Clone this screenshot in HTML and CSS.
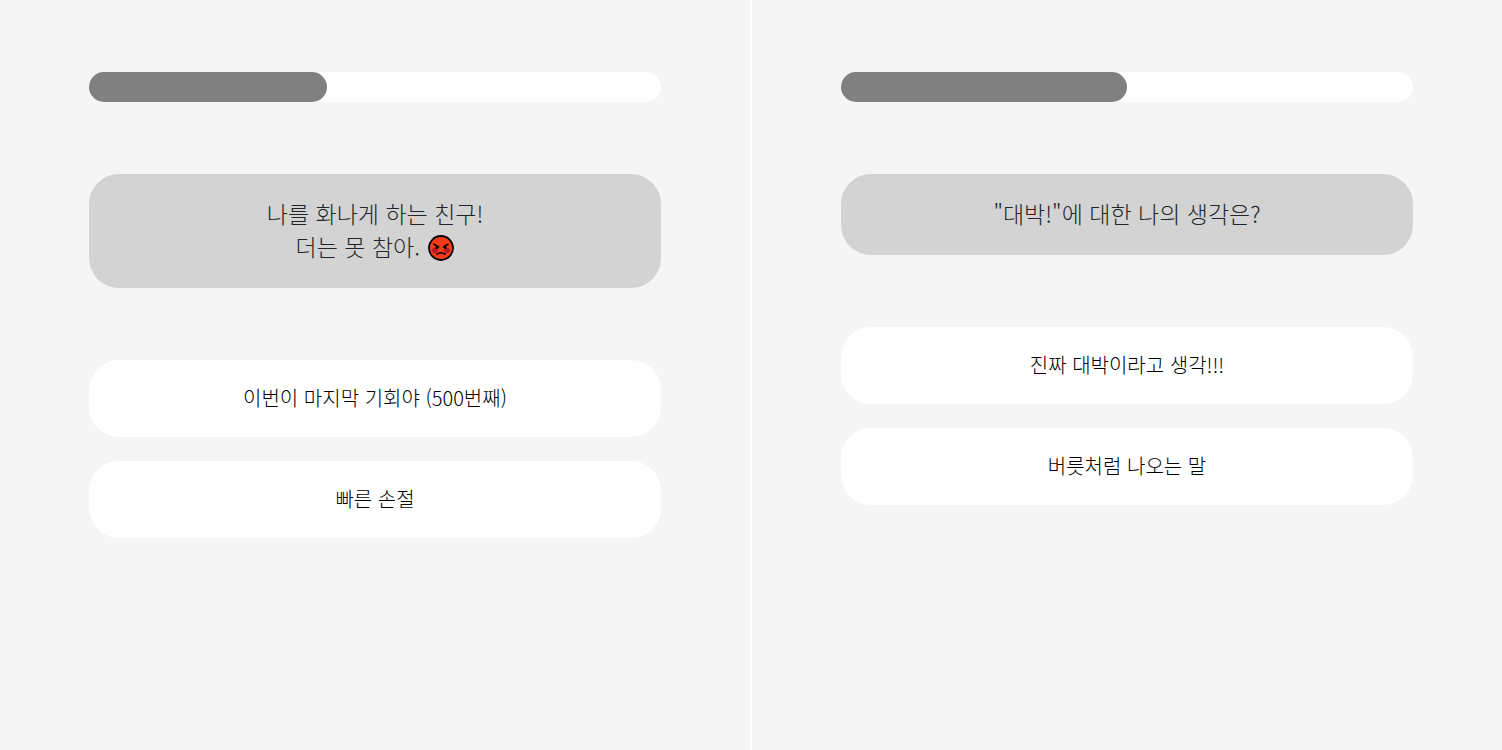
FILE: index.html
```html
<!DOCTYPE html>
<html lang="ko">
<head>
    <meta charset="UTF-8">
    <meta name="viewport" content="width=device-width, initial-scale=1.0">
    <title>테스트</title>
    <link rel="stylesheet" href="styles.css">
</head>
<body>
    <main class="screens">
        <section class="screen">
            <div class="status" role="progressbar" aria-label="진행" aria-valuemin="0" aria-valuemax="12" aria-valuenow="5">
                <div class="statusBar" style="width: 41.67%"></div>
            </div>
            <h1 class="qBox">나를 화나게 하는 친구!<br>더는 못 참아.
                <svg class="emoji" viewBox="0 0 26 26" role="img" aria-label="화난 얼굴">
                    <circle cx="13" cy="13" r="12" fill="#f23b18" stroke="#000" stroke-width="1.8"/>
                    <circle cx="7" cy="15.5" r="2.8" fill="#bd1628"/>
                    <circle cx="19" cy="15.5" r="2.8" fill="#bd1628"/>
                    <circle cx="8.8" cy="12.8" r="1.3"/>
                    <circle cx="17.2" cy="12.8" r="1.3"/>
                    <path d="M6 9.3l4.5 2.7M20 9.3l-4.5 2.7M9 19.2q4-2.8 8 0" fill="none" stroke="#000" stroke-width="1.6" stroke-linecap="round"/>
                </svg>
            </h1>
            <div class="answerBox">
                <button class="answerList" type="button">이번이 마지막 기회야 (500번째)</button>
                <button class="answerList" type="button">빠른 손절</button>
            </div>
        </section>
        <section class="screen">
            <div class="status" role="progressbar" aria-label="진행" aria-valuemin="0" aria-valuemax="12" aria-valuenow="6">
                <div class="statusBar" style="width: 50%"></div>
            </div>
            <h1 class="qBox">"대박!"에 대한 나의 생각은?</h1>
            <div class="answerBox">
                <button class="answerList" type="button">진짜 대박이라고 생각!!!</button>
                <button class="answerList" type="button">버릇처럼 나오는 말</button>
            </div>
        </section>
    </main>
</body>
</html>
```
FILE: styles.css
```css
* {
    box-sizing: border-box;
}
body {
    margin: 0;
    background-color: #fff;
    color: #212529;
    font-family: "Noto Sans CJK KR", sans-serif;
    font-weight: 300;
}
.screens {
    display: grid;
    grid-template-columns: 1fr 1fr;
    gap: 2px;
    min-height: 100vh;
}
.screen {
    padding: 72px 89px;
    background-color: whitesmoke;
}
.status {
    height: 30px;
    border-radius: 15px;
    background-color: #fff;
}
.statusBar {
    height: 100%;
    border-radius: 15px;
    background-color: gray;
}
.qBox {
    margin: 72px 0;
    padding: 23px 24px 25px;
    border-radius: 30px;
    background-color: lightgray;
    font-size: 23px;
    font-weight: 300;
    line-height: 33px;
    text-align: center;
}
.emoji {
    width: 26px;
    height: 26px;
    margin-left: 2px;
    vertical-align: -5px;
}
.answerBox {
    display: flex;
    flex-direction: column;
    gap: 24px;
}
.answerList {
    padding: 23px 24px 25px;
    border: 0;
    border-radius: 30px;
    background-color: #fff;
    color: #000;
    font-family: inherit;
    font-size: 20px;
    font-weight: 300;
    line-height: 29px;
    cursor: pointer;
}
```
